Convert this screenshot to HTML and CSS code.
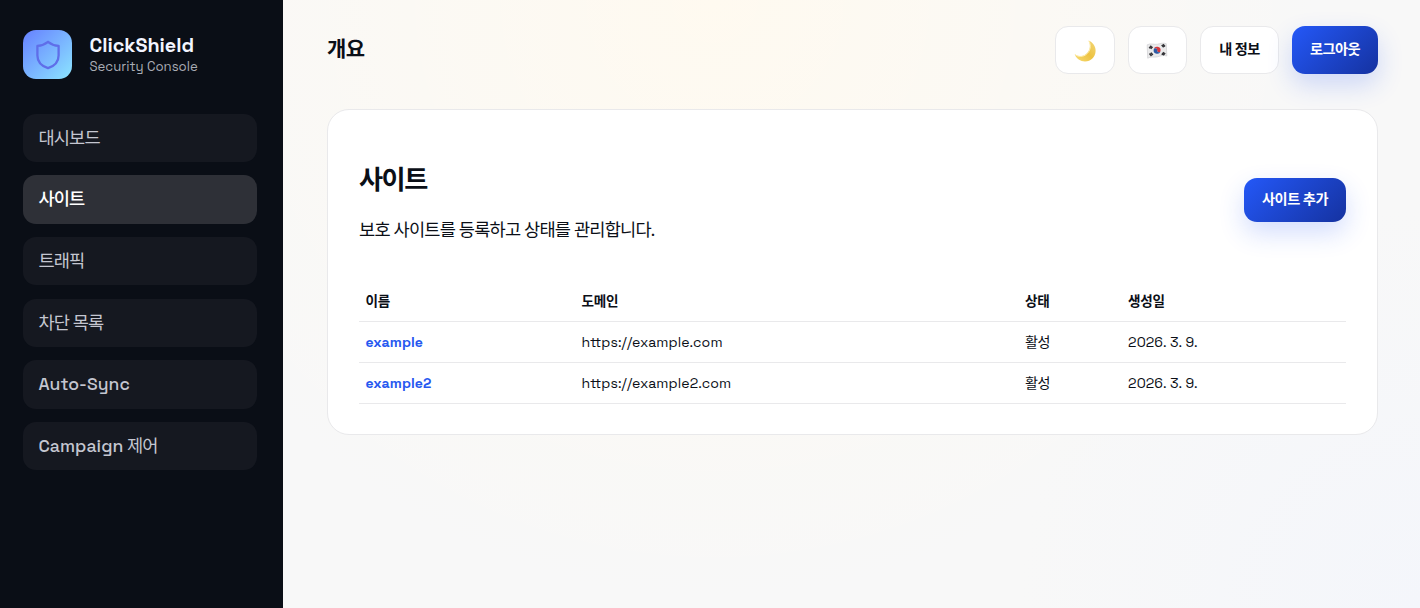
FILE: index.html
```html
<!DOCTYPE html>
<html lang="ko">
<head>
    <meta charset="UTF-8">
    <meta name="viewport" content="width=device-width, initial-scale=1.0">
    <title>ClickShield</title>
    <link rel="stylesheet" href="styles.css">
</head>
<body>
    <div class="shell">
        <aside class="sidebar">
            <div class="brand">
                <div class="brand-mark">
                    <svg width="26" height="30" viewBox="0 0 26 30" fill="none" stroke="#5f6ee9" stroke-width="2.3" stroke-linejoin="round">
                        <path d="M13 1.8C10 4.2 6.3 5.6 2.4 5.9V15.5C2.4 21.8 7 26.2 13 28.2C19 26.2 23.6 21.8 23.6 15.5V5.9C19.7 5.6 16 4.2 13 1.8Z"/>
                    </svg>
                </div>
                <div class="brand-text">
                    <div class="brand-title">ClickShield</div>
                    <div class="brand-sub">Security Console</div>
                </div>
            </div>
            <nav class="nav">
                <a class="nav-item">대시보드</a>
                <a class="nav-item active">사이트</a>
                <a class="nav-item">트래픽</a>
                <a class="nav-item">차단 목록</a>
                <a class="nav-item"><span class="latin">Auto-Sync</span></a>
                <a class="nav-item"><span class="latin">Campaign</span> 제어</a>
            </nav>
        </aside>

        <main class="main">
            <header class="topbar">
                <div class="topbar-title">개요</div>
                <div class="actions">
                    <button class="btn btn-icon" aria-label="theme">
                        <svg class="moon" width="24" height="24" viewBox="0 0 24 24">
                            <defs>
                                <linearGradient id="moon" x1="0" y1="1" x2="1" y2="0">
                                    <stop offset="0" stop-color="#f7dc75"/>
                                    <stop offset=".5" stop-color="#edc343"/>
                                    <stop offset="1" stop-color="#f3d778"/>
                                </linearGradient>
                            </defs>
                            <path d="M15.5 1.5C20 3.6 22.8 7.3 22.6 12C22.4 18.1 17.8 22.4 12 22.4C7.3 22.4 3.4 20 1.7 15.3C5 17.7 9.4 18 12.8 15.3C17.3 11.8 18.2 6.2 15.5 1.5Z" fill="url(#moon)"/>
                            <path d="M2 15.7C5.3 18 10 18.1 13.4 15.3C17.5 11.9 18.4 6.6 15.9 2" fill="none" stroke="#fff0b3" stroke-width="1"/>
                        </svg>
                    </button>
                    <button class="btn btn-icon" aria-label="language">
                        <svg class="flag" width="22" height="18" viewBox="0 0 22 18">
                            <path d="M1.2 2.8C5 .8 8.5 3 11.5 2.2C14.5 1.4 17.5.6 20.3 1.7L20.8 14C17.5 12.8 14.5 14 11.5 14.8C8 15.7 5 14.2 1.7 16.2Z" fill="#eaeaeb" stroke="#d0d0d2" stroke-width=".7"/>
                            <g transform="rotate(8 11 8.3)">
                                <path d="M7.6 8.3a3.5 3.5 0 0 1 7 0a1.75 1.75 0 0 1-3.5 0a1.75 1.75 0 0 0-3.5 0Z" fill="#d63a3f"/>
                                <path d="M14.6 8.3a3.5 3.5 0 0 1-7 0a1.75 1.75 0 0 1 3.5 0a1.75 1.75 0 0 0 3.5 0Z" fill="#2c5aa5"/>
                            </g>
                            <path d="M3.2 6.3L5.3 3.8M4.7 6.9L6.5 4.7M15.7 3L17.7 5.2M17 2.3L19 4.5M3.5 11.5L5.5 14M4.9 10.6L6.8 13M15.8 12.8L17.9 10.3M17.2 13.3L19.1 11" stroke="#343438" stroke-width="1.5"/>
                        </svg>
                    </button>
                    <button class="btn">내 정보</button>
                    <button class="btn btn-primary">로그아웃</button>
                </div>
            </header>

            <section class="card">
                <div class="card-head">
                    <div>
                        <h1>사이트</h1>
                        <p>보호 사이트를 등록하고 상태를 관리합니다.</p>
                    </div>
                    <button class="btn btn-primary btn-add">사이트 추가</button>
                </div>
                <table class="table">
                    <colgroup>
                        <col class="col-name">
                        <col class="col-domain">
                        <col class="col-status">
                        <col>
                    </colgroup>
                    <thead>
                        <tr>
                            <th>이름</th>
                            <th>도메인</th>
                            <th>상태</th>
                            <th>생성일</th>
                        </tr>
                    </thead>
                    <tbody>
                        <tr>
                            <td><a class="site-link">example</a></td>
                            <td class="domain">https://example.com</td>
                            <td class="status">활성</td>
                            <td class="date">2026. 3. 9.</td>
                        </tr>
                        <tr>
                            <td><a class="site-link">example2</a></td>
                            <td class="domain">https://example2.com</td>
                            <td class="status">활성</td>
                            <td class="date">2026. 3. 9.</td>
                        </tr>
                    </tbody>
                </table>
            </section>
        </main>
    </div>
</body>
</html>
```
FILE: styles.css
```css
* {
    box-sizing: border-box;
}
body {
    margin: 0;
    font-family: "Space Grotesk", Inter, "Noto Sans CJK KR", sans-serif;
    font-size: 17.6px;
    color: #0b0f17;
    background: radial-gradient(circle at 715px 0, #fffaf0 0, rgba(255, 250, 240, 0) 600px),
        radial-gradient(circle at 100% 100%, #f4f6fb 0, rgba(244, 246, 251, 0) 400px),
        #f8f8f8;
}
.shell {
    display: flex;
    min-height: 608px;
}

/* sidebar */
.sidebar {
    width: 283px;
    flex: none;
    padding: 30px 26px 30px 23px;
    background: #0a0e16;
}
.brand {
    display: flex;
    align-items: center;
    gap: 17.4px;
    margin-bottom: 34.8px;
}
.brand-mark {
    display: flex;
    align-items: center;
    justify-content: center;
    width: 49px;
    height: 49px;
    border-radius: 13px;
    background: linear-gradient(135deg, #6680ff, #8ce5ff);
}
.brand-title {
    font-size: 19.8px;
    font-weight: 700;
    line-height: 24px;
    color: #f3f5ff;
}
.brand-sub {
    font-size: 13.2px;
    line-height: 18px;
    color: #a9acb4;
}
.nav {
    display: grid;
    gap: 13.2px;
}
.nav-item {
    height: 48.4px;
    padding: 0 15.4px;
    border-radius: 13px;
    background: #151820;
    color: #c4c6d0;
    line-height: 49px;
    letter-spacing: -0.85px;
}
.nav-item.active {
    background: #2e3037;
    color: #fff;
    font-weight: 500;
}
.latin {
    font-weight: 500;
    letter-spacing: 0.05px;
}

/* content */
.main {
    flex: 1;
    padding: 26px 42px 40px 44px;
}
.topbar {
    display: flex;
    justify-content: space-between;
    align-items: center;
    height: 48px;
    margin-bottom: 35px;
}
.topbar-title {
    font-size: 21px;
    font-weight: 600;
    letter-spacing: -0.6px;
    line-height: 30px;
    padding-bottom: 3px;
}
.actions {
    display: flex;
    gap: 13.2px;
}
.btn {
    display: flex;
    align-items: center;
    justify-content: center;
    width: 78.6px;
    height: 48px;
    padding: 0 0 4px;
    border: 1px solid #e9e9eb;
    border-radius: 13px;
    background: #fff;
    color: #0b0f17;
    font-family: inherit;
    font-size: 14.2px;
    font-weight: 700;
    letter-spacing: -0.5px;
    white-space: nowrap;
}
.btn-icon {
    width: 59.2px;
    padding: 0 0 2px;
}
.moon {
    margin: 3px 0 0;
}
.flag {
    margin: 4px 1px 0 0;
}
.btn-primary {
    width: 86px;
    border: none;
    color: #fff;
    background: linear-gradient(135deg, #2458f8, #1532a0);
    box-shadow: 0 11px 26px rgba(36, 84, 245, 0.2);
}
.card {
    height: 326px;
    padding: 30px 31px;
    border: 1px solid #e9e9eb;
    border-radius: 22px;
    background: #fff;
}
.card-head {
    display: flex;
    justify-content: space-between;
    align-items: center;
    height: 120px;
    margin-bottom: 20px;
}
.card-head h1 {
    margin: 3px 0 18px;
    font-size: 26.2px;
    font-weight: 700;
    line-height: 38px;
    letter-spacing: -1.5px;
}
.card-head p {
    margin: 0;
    line-height: 26px;
    letter-spacing: -0.8px;
}
.btn-add {
    width: 102px;
    height: 44px;
}
.table {
    width: 100%;
    border-collapse: collapse;
    table-layout: fixed;
    font-size: 14.1px;
}
.col-name {
    width: 216px;
}
.col-domain {
    width: 443.5px;
}
.col-status {
    width: 103px;
}
.table th,
.table td {
    height: 41px;
    padding: 0 6.6px;
    border-bottom: 1px solid #e9e9eb;
    text-align: left;
    letter-spacing: -0.5px;
}
.table th {
    font-size: 13.6px;
    font-weight: 700;
    letter-spacing: -0.3px;
}
.site-link {
    color: #2759f0;
    font-weight: 700;
    letter-spacing: 0.05px;
}
.table .domain {
    letter-spacing: 0.08px;
}
.table .status {
    padding-bottom: 2px;
}
.table .date {
    letter-spacing: 0.08px;
}
```
